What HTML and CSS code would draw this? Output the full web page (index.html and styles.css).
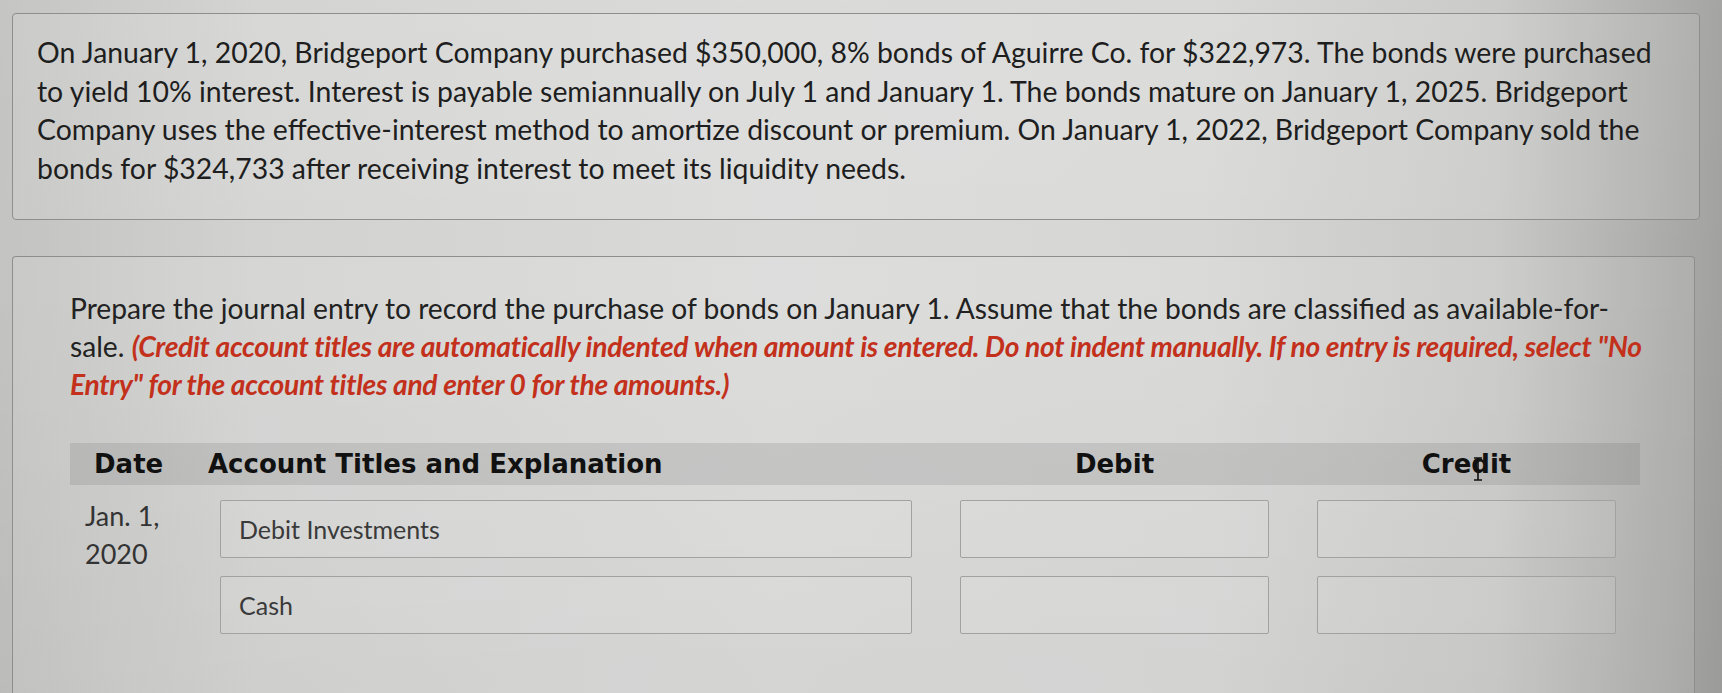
FILE: index.html
```html
<!DOCTYPE html>
<html lang="en">
<head>
<meta charset="utf-8">
<title>Bond investment journal entry</title>
<link rel="stylesheet" href="styles.css">
</head>
<body>
<div class="page">
  <section class="card intro">
    <p class="stem">On January 1, 2020, Bridgeport Company purchased $350,000, 8% bonds of Aguirre Co. for $322,973. The bonds were purchased<br>to yield 10% interest. Interest is payable semiannually on July 1 and January 1. The bonds mature on January 1, 2025. Bridgeport<br>Company uses the effective-interest method to amortize discount or premium. On January 1, 2022, Bridgeport Company sold the<br>bonds for $324,733 after receiving interest to meet its liquidity needs.</p>
  </section>
  <section class="card question">
    <p class="prompt">Prepare the journal entry to record the purchase of bonds on January 1. Assume that the bonds are classified as available-for-<br>sale. <span class="note">(Credit account titles are automatically indented when amount is entered. Do not indent manually. If no entry is required, select "No<br>Entry" for the account titles and enter 0 for the amounts.)</span></p>
    <div class="journal">
      <div class="jhead">
        <div class="h-date">Date</div>
        <div class="h-acct">Account Titles and Explanation</div>
        <div class="h-num">Debit</div>
        <div class="h-num h-credit">Cre<span class="caret-wrap">d<svg class="ibeam" viewBox="0 0 10 24" width="10" height="24"><path d="M1 1h8M5 1v22M1 23h8" fill="none" stroke="#111" stroke-width="1.6"/></svg></span>it</div>
      </div>
      <div class="jrow">
        <div class="date">Jan. 1,<br>2020</div>
        <div class="cell acct"><div class="field">Debit Investments</div></div>
        <div class="cell"><div class="field"></div></div>
        <div class="cell"><div class="field"></div></div>
      </div>
      <div class="jrow">
        <div class="date"></div>
        <div class="cell acct"><div class="field">Cash</div></div>
        <div class="cell"><div class="field"></div></div>
        <div class="cell"><div class="field"></div></div>
      </div>
    </div>
  </section>
</div>
</body>
</html>
```
FILE: styles.css
```css
html, body {
  margin: 0;
  height: 100%;
  overflow: hidden;
}
body {
  font-family: "Lato", "Open Sans", sans-serif;
  color: #242424;
  background:
    linear-gradient(180deg, rgba(255,255,255,0.04) 0%, rgba(255,255,255,0) 40%, rgba(0,0,0,0.04) 100%),
    linear-gradient(90deg, #c3c4c1 0%, #d2d3d1 15%, #d9dad8 45%, #d6d7d5 70%, #c8c9c6 87%, #adaeab 96%, #a1a29f 100%);
}
.page {
  display: flex;
  flex-direction: column;
  gap: 36px;
  padding: 13px 22px 0 12px;
}
.card {
  border: 1.5px solid #8e8f8b;
  border-radius: 4px;
  background: rgba(255,255,255,0.10);
}
.intro {
  padding: 19px 24px 32px;
}
.stem {
  margin: 0;
  font-size: 28.4px;
  line-height: 38.5px;
  white-space: nowrap;
  color: #1e1e1e;
}
.question {
  margin-right: 5px;
  padding: 32px 0 0 57px;
  min-height: 500px;
  border-bottom: none;
  border-radius: 4px 4px 0 0;
}
.prompt {
  margin: 0 0 40px;
  font-size: 28.2px;
  line-height: 38px;
  white-space: nowrap;
  color: #222;
}
.note {
  color: #c3301b;
  font-weight: 700;
  font-style: italic;
  letter-spacing: -0.3px;
}
.journal {
  width: 1570px;
}
.jhead,
.jrow {
  display: grid;
  grid-template-columns: 138px 728px 357px 347px;
}
.jhead {
  height: 42px;
  align-items: center;
  background: rgba(80,82,78,0.15);
  font-family: "DejaVu Sans", "Verdana", sans-serif;
  font-weight: 700;
  font-size: 26px;
  color: #111;
}
.h-date {
  padding-left: 24px;
}
.h-num {
  text-align: center;
}
.caret-wrap {
  position: relative;
}
.ibeam {
  position: absolute;
  left: 2px;
  top: 8px;
}
.jrow {
  padding-top: 15px;
}
.jrow + .jrow {
  padding-top: 18px;
}
.date {
  height: 58px;
  padding-left: 15px;
  margin-top: -3px;
  font-size: 27px;
  line-height: 38px;
  color: #333;
  white-space: nowrap;
}
.cell {
  padding: 0 24px;
}
.cell.acct {
  padding-left: 12px;
}
.field {
  height: 58px;
  box-sizing: border-box;
  border: 1.5px solid #a2a39f;
  border-radius: 2px;
  background: rgba(255,255,255,0.08);
  display: flex;
  align-items: center;
  padding-left: 18px;
  font-size: 25px;
  color: #3a3a3a;
}
```
